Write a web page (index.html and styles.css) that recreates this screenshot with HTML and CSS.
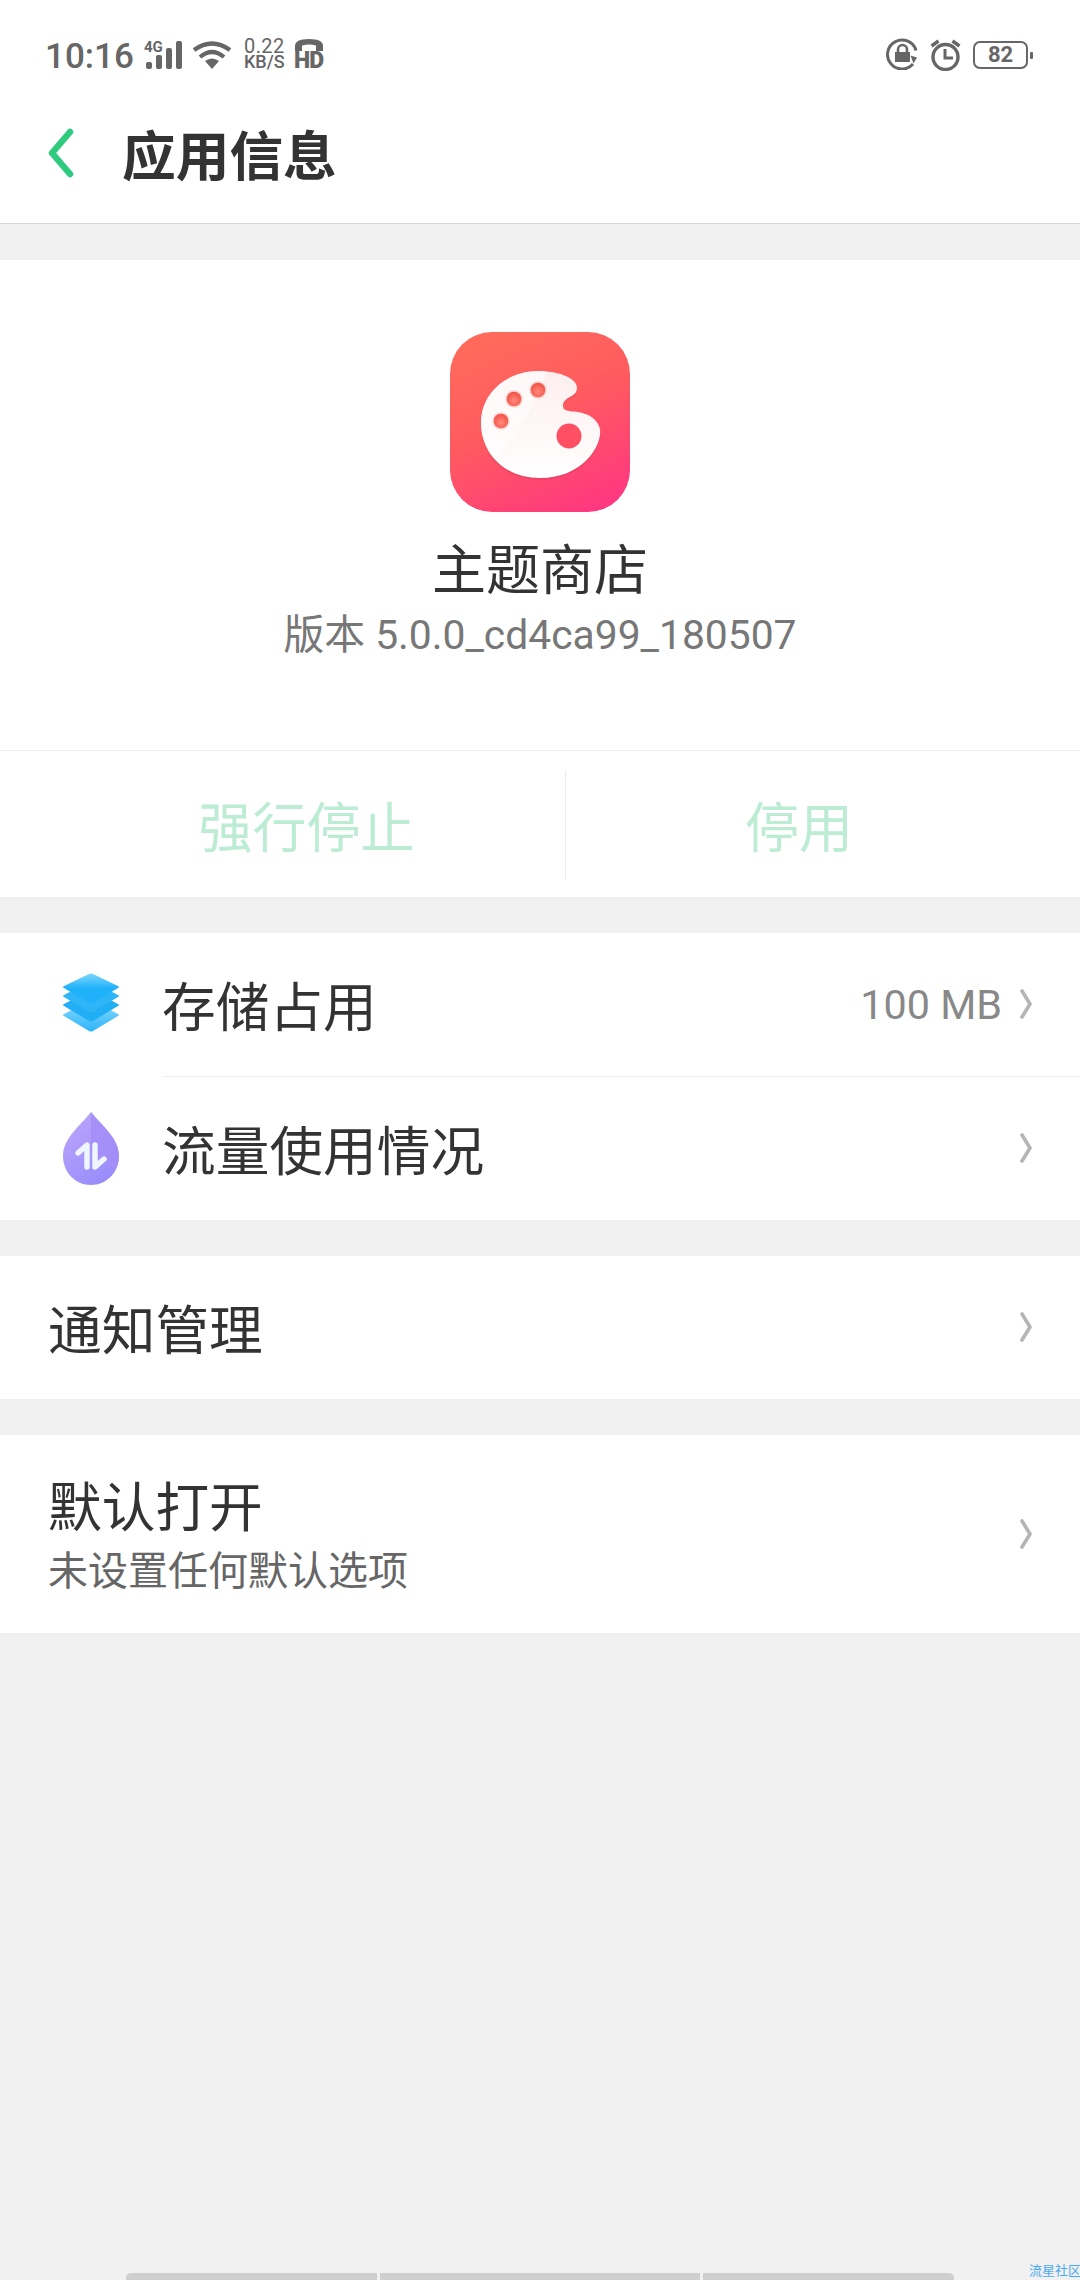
FILE: index.html
```html
<!DOCTYPE html>
<html lang="zh">
<head>
<meta charset="utf-8">
<title>应用信息</title>
<link rel="stylesheet" href="styles.css">
</head>
<body>
<header class="top">
  <div class="status">
    <div class="status-left">
      <span class="time">10:16</span>
      <span class="signal">
        <span class="net">4G</span>
        <svg width="36" height="29" viewBox="0 0 36 29"><g fill="#666"><rect x="0" y="21" width="6" height="7" rx="2"/><rect x="10" y="14" width="6" height="14" rx="2"/><rect x="20" y="7" width="6" height="21" rx="2"/><rect x="30" y="0" width="6" height="28" rx="2"/></g></svg>
      </span>
      <svg class="wifi" width="40" height="30" viewBox="0 0 40 30"><g fill="none" stroke="#666" stroke-width="4.2"><path d="M2 10 Q20 -3 38 10"/><path d="M8 17 Q20 7 32 17"/></g><path d="M13 21 Q20 16 27 21 L20 29 Z" fill="#666"/></svg>
      <span class="speed"><span>0.22</span><span class="speed-unit">KB/S</span></span>
      <span class="hd">
        <svg width="30" height="14" viewBox="0 0 30 14"><path d="M1 13 V8 Q1 1 15 1 Q29 1 29 8 V13 H22 V7.5 Q15 5.5 8 7.5 V13 Z" fill="#666"/></svg>
        <span class="hd-text">HD</span>
      </span>
    </div>
    <div class="status-right">
      <svg width="32" height="32" viewBox="0 0 32 32"><path d="M27 26 A14.5 14.5 0 1 1 30 12.5" fill="none" stroke="#666" stroke-width="3"/><path d="M24.5 17.5 L31 19.5 L27.5 25.5 Z" fill="#666"/><rect x="9" y="14" width="15" height="10" fill="#666"/><path d="M12 14 V11.5 A4.5 4.5 0 0 1 21 11.5 V14" fill="none" stroke="#666" stroke-width="2.6"/></svg>
      <svg width="31" height="33" viewBox="0 0 31 33"><circle cx="15.5" cy="19" r="12.5" fill="none" stroke="#666" stroke-width="3.4"/><path d="M15 11 V20 H23" fill="none" stroke="#666" stroke-width="3"/><path d="M1.5 8 L8.5 3 M22.5 3 L29.5 8" stroke="#666" stroke-width="3.4" fill="none"/></svg>
      <span class="battery"><span class="battery-body">82</span><span class="battery-nub"></span></span>
    </div>
  </div>
  <div class="titlebar">
    <svg class="back" width="26" height="50" viewBox="0 0 26 50"><path d="M22 4 L4 25 L22 46" fill="none" stroke="#2ecb7f" stroke-width="6.5" stroke-linecap="round" stroke-linejoin="round"/></svg>
    <h1 class="title">应用信息</h1>
  </div>
</header>

<section class="card app-card">
  <div class="app-head">
    <svg class="app-icon" width="180" height="180" viewBox="0 0 180 180">
      <defs>
        <linearGradient id="bg" x1="0.3" y1="0" x2="0.75" y2="1"><stop offset="0" stop-color="#ff6a5b"/><stop offset="0.45" stop-color="#ff5a60"/><stop offset="1" stop-color="#ff387f"/></linearGradient>
        <linearGradient id="pal" x1="0.5" y1="0" x2="0.5" y2="1"><stop offset="0" stop-color="#fdeeee"/><stop offset="1" stop-color="#ffffff"/></linearGradient>
        <radialGradient id="dot" cx="0.5" cy="0.6" r="0.6"><stop offset="0" stop-color="#ff8a7c"/><stop offset="1" stop-color="#f2493f"/></radialGradient>
      </defs>
      <rect width="180" height="180" rx="42" fill="url(#bg)"/>
      <path d="M88 41 C106 41 127 47 127 58 C127 68 113 66 113 76 C113 84 128 79 140 86 C148 91 151 98 150 104 C149 120 130 148 90 148 C55 148 31 124 31 93 C31 62 58 41 88 41 Z" fill="#c9324a" opacity=".28"/>
      <path d="M88 39 C106 39 127 45 127 56 C127 66 113 64 113 74 C113 82 128 77 140 84 C148 89 151 96 150 102 C149 118 130 146 90 146 C55 146 31 122 31 91 C31 60 58 39 88 39 Z" fill="url(#pal)"/>
      <path d="M88 39 C60 39 31 60 31 91 C31 104 36 115 44 124 C70 105 85 70 97 40 C94 39 91 39 88 39 Z" fill="#fff" opacity=".55"/>
      <circle cx="119" cy="104" r="12.5" fill="#ff5063"/>
      <g fill="url(#dot)" stroke="#fbd2cf" stroke-width="1.5"><circle cx="64" cy="67" r="8"/><circle cx="88" cy="58" r="8"/><circle cx="51" cy="89" r="8"/></g>
    </svg>
    <div class="app-name">主题商店</div>
    <div class="app-version">版本 5.0.0_cd4ca99_180507</div>
  </div>
  <div class="actions">
    <div class="action action-first">强行停止</div>
    <div class="action">停用</div>
  </div>
</section>

<section class="card group">
  <div class="row row-tall">
    <svg class="row-icon row-icon-layers" width="58" height="60" viewBox="0 0 58 60">
      <defs>
        <linearGradient id="l1" x1="0" y1="0" x2="0" y2="1"><stop offset="0" stop-color="#7fd6fb"/><stop offset="0.5" stop-color="#1fb2fb"/></linearGradient>
        <linearGradient id="l2" x1="0" y1="0" x2="0" y2="1"><stop offset="0" stop-color="#8fdcfc"/><stop offset="1" stop-color="#2cb4fb"/></linearGradient>
      </defs>
      <path d="M2 41 L27 28 Q29 27 31 28 L56 41 Q58 42 56 43 L31 58 Q29 59 27 58 L2 43 Q0 42 2 41 Z" fill="url(#l2)"/>
      <path d="M2 31 L27 18 Q29 17 31 18 L56 31 Q58 32 56 33 L31 48 Q29 49 27 48 L2 33 Q0 32 2 31 Z" fill="#22aef5"/>
      <path d="M2 22 L27 9 Q29 8 31 9 L56 22 Q58 23 56 24 L31 39 Q29 40 27 39 L2 24 Q0 23 2 22 Z" fill="#2db5f8"/>
      <path d="M2 13 L27 1 Q29 0 31 1 L56 13 Q58 14 56 15 L31 30 Q29 31 27 30 L2 15 Q0 14 2 13 Z" fill="url(#l1)"/>
    </svg>
    <span class="row-label">存储占用</span>
    <span class="row-value">100 MB</span>
    <svg class="chev" width="12" height="30" viewBox="0 0 12 30"><path d="M2 2 L10 15 L2 28" fill="none" stroke="#b5b5b5" stroke-width="3.6" stroke-linecap="round" stroke-linejoin="round"/></svg>
  </div>
  <div class="row-divider"></div>
  <div class="row row-tall">
    <svg class="row-icon" width="58" height="73" viewBox="0 0 58 73">
      <defs><linearGradient id="d1" x1="0" y1="0" x2="0.6" y2="1"><stop offset="0" stop-color="#bfa8fb"/><stop offset="1" stop-color="#9a8dfb"/></linearGradient></defs>
      <path d="M29 0 C40 14 57 26 57 44 C57 60 45 73 29 73 C13 73 1 60 1 44 C1 26 18 14 29 0 Z" fill="url(#d1)"/>
      <path d="M29 0 C40 14 57 26 57 44 C57 50 55 55 52 60 L29 40 Z" fill="#a48df8" opacity=".8"/>
      <path d="M16 41 L25 33 V55 M33 33 V55 L42 47" fill="none" stroke="#eef7fd" stroke-width="5.4" stroke-linecap="round" stroke-linejoin="round"/>
    </svg>
    <span class="row-label">流量使用情况</span>
    <svg class="chev" width="12" height="30" viewBox="0 0 12 30"><path d="M2 2 L10 15 L2 28" fill="none" stroke="#b5b5b5" stroke-width="3.6" stroke-linecap="round" stroke-linejoin="round"/></svg>
  </div>
</section>

<section class="card group">
  <div class="row row-plain">
    <span class="row-label">通知管理</span>
    <svg class="chev" width="12" height="30" viewBox="0 0 12 30"><path d="M2 2 L10 15 L2 28" fill="none" stroke="#b5b5b5" stroke-width="3.6" stroke-linecap="round" stroke-linejoin="round"/></svg>
  </div>
</section>

<section class="card group">
  <div class="row row-double">
    <div class="row-stack">
      <span class="row-label">默认打开</span>
      <span class="row-sub">未设置任何默认选项</span>
    </div>
    <svg class="chev" width="12" height="30" viewBox="0 0 12 30"><path d="M2 2 L10 15 L2 28" fill="none" stroke="#b5b5b5" stroke-width="3.6" stroke-linecap="round" stroke-linejoin="round"/></svg>
  </div>
</section>

<footer class="foot">
  <span class="foot-bar foot-bar-l"></span>
  <span class="foot-bar foot-bar-m"></span>
  <span class="foot-bar foot-bar-r"></span>
  <span class="mark">流星社区</span>
</footer>
</body>
</html>
```

FILE: styles.css
```css
* { box-sizing: border-box; }
html, body { margin: 0; padding: 0; }
body {
  width: 1080px;
  height: 2280px;
  overflow: hidden;
  background: #f1f1f1;
  font-family: "Noto Sans CJK SC", "Noto Sans", sans-serif;
  color: #333;
  display: flex;
  flex-direction: column;
}
.top {
  height: 224px;
  background: #fff;
  border-bottom: 1px solid #d9d9d9;
  flex: none;
}
.status {
  height: 88px;
  padding: 38px 47px 0 45px;
  display: flex;
  justify-content: space-between;
  align-items: flex-start;
  color: #666;
}
.status-left, .status-right { display: flex; align-items: flex-start; }
.time {
  font: 500 35px/34px Roboto, sans-serif;
  margin-top: 2px;
  width: 99px;
}
.signal { position: relative; width: 48px; display: block; height: 31px; }
.signal svg { position: absolute; left: 2px; top: 3px; }
.net {
  position: absolute;
  left: 0;
  top: 2px;
  font: 700 15px/14px Roboto, sans-serif;
}
.wifi { margin-top: 2px; }
.speed {
  width: 50px;
  margin-left: 12px;
  display: flex;
  flex-direction: column;
  font: 400 20px/16px Roboto, sans-serif;
  letter-spacing: 0.4px;
}
.speed-unit { font-weight: 500; font-size: 18px; letter-spacing: 0; }
.hd {
  display: flex;
  flex-direction: column;
  width: 30px;
}
.hd-text { font: 900 23px/18px Roboto, sans-serif; letter-spacing: -1px; }
.status-right { gap: 12px; }
.battery { display: flex; align-items: center; margin-top: 3px; }
.battery-body {
  width: 55px;
  height: 28px;
  border: 2.5px solid #666;
  border-radius: 7px;
  text-align: center;
  font: 700 22px/23px Roboto, sans-serif;
}
.battery-nub { width: 3px; height: 7px; margin-left: 2px; background: #666; border-radius: 1px; }
.titlebar {
  height: 135px;
  padding-left: 48px;
  display: flex;
  align-items: center;
}
.back { margin-top: -6px; }
.title {
  margin: -6px 0 0 48px;
  font-size: 53.7px;
  font-weight: 700;
  line-height: 70px;
  color: #333;
}
.card { background: #fff; flex: none; }
.app-card { margin-top: 36px; height: 637px; display: flex; flex-direction: column; }
.app-head {
  height: 491px;
  padding-top: 72px;
  display: flex;
  flex-direction: column;
  align-items: center;
  border-bottom: 1px solid #ececec;
}
.app-icon { display: block; flex: none; }
.app-name { font-size: 54px; line-height: 70px; margin-top: 20px; color: #333; }
.app-version { font: 400 40.8px/54px Roboto, "Noto Sans CJK SC", sans-serif; color: #777; margin-top: 6px; }
.actions {
  flex: 1;
  display: grid;
  grid-template-columns: 518px 1fr;
  padding: 0 48px;
  align-items: center;
}
.action {
  text-align: center;
  font-size: 54px;
  line-height: 110px;
  color: #bdecd5;
  margin-top: 2px;
}
.action-first { border-right: 1px solid #ececec; }
.group { margin-top: 36px; }
.row { display: flex; align-items: center; padding-right: 48px; }
.row-tall { height: 143px; padding-left: 62px; }
.row-plain { height: 143px; padding-left: 48px; }
.row-double { height: 198px; padding-left: 48px; }
.row-icon { flex: none; display: block; margin-right: 42px; }
.row-icon-layers { margin-top: -4px; }
.row-label { font-size: 53.7px; line-height: 70px; color: #333; flex: none; margin-top: -2px; }
.row-value { font: 400 41.3px/50px Roboto, sans-serif; color: #888; margin-left: auto; margin-right: 18px; }
.chev { flex: none; margin-left: auto; display: block; margin-top: -1px; }
.row-value + .chev { margin-left: 0; }
.row-divider { height: 1px; margin-left: 163px; background: #ececec; }
.row-stack { display: flex; flex-direction: column; }
.row-stack .row-label { line-height: 68px; margin-top: -6px; }
.row-sub { font-size: 40px; line-height: 50px; color: #666; margin-top: 5px; }
.foot {
  margin-top: auto;
  height: 7px;
  display: flex;
  padding-left: 126px;
  gap: 3px;
  position: relative;
}
.foot-bar { height: 7px; background: #cfcfcf; display: block; }
.foot-bar-l { width: 251px; border-radius: 5px 0 0 0; }
.foot-bar-m { width: 320px; }
.foot-bar-r { width: 251px; border-radius: 0 5px 0 0; }
.mark {
  position: absolute;
  left: 1029px;
  top: -13px;
  font-size: 13px;
  line-height: 20px;
  color: #49a9f5;
  white-space: nowrap;
}
```
